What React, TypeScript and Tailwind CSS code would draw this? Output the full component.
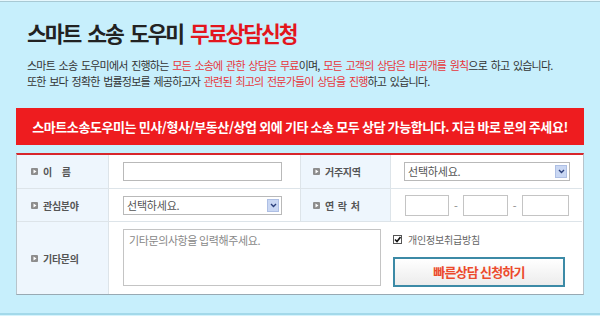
import React from "react";

const FONT = { fontFamily: '"Noto Sans CJK KR", "Noto Sans", sans-serif' };

function Bullet() {
  return (
    <span className="inline-flex w-[7px] h-[7px] bg-[#8d8d8d] rounded-[1px] items-center justify-center shrink-0">
      <svg width="4" height="5" viewBox="0 0 4 5">
        <path d="M0.5 0.5 L3.5 2.5 L0.5 4.5 Z" fill="#fff" />
      </svg>
    </span>
  );
}

function Label({ children, pl = "pl-[14px]" }: { children: React.ReactNode; pl?: string }) {
  return (
    <div className={`flex items-center gap-[5px] ${pl} bg-[#eef6fd] h-full`}>
      <Bullet />
      <span className="text-[10px] font-bold text-[#555] tracking-[-0.3px]">{children}</span>
    </div>
  );
}

function SelectBox({ w }: { w: string }) {
  return (
    <div className={`${w} h-[19px] border border-[#b9b9b9] bg-white flex items-center justify-between pl-[3px] pr-[2px]`}>
      <span className="text-[11px] text-[#555] tracking-[-0.2px]">선택하세요.</span>
      <span className="w-[12px] h-[13px] bg-[#c9d7f3] border border-[#aebfe4] flex items-center justify-center">
        <svg width="7" height="5" viewBox="0 0 7 5">
          <path d="M1 1 L3.5 3.5 L6 1" stroke="#2a3f7a" strokeWidth="1.4" fill="none" />
        </svg>
      </span>
    </div>
  );
}

export default function App() {
  const red = "text-[#e8363b]";
  return (
    <div style={FONT} className="w-[600px] h-[316px] bg-[#c7effc] overflow-hidden flex flex-col">
      <div className="h-[1px] bg-[#e6f7fd]" />
      <div className="h-[1px] bg-[#a8c9d4]" />
      <div className="px-[27px] pt-[18px]">
        <h1 className="text-[21.5px] leading-[26px] font-bold tracking-[-2px] [word-spacing:4px] text-[#222]">
          스마트 소송 도우미 <span className="text-[#e3161d]">무료상담신청</span>
        </h1>
        <p className="mt-[11px] text-[11px] leading-[16px] text-[#333] tracking-[-0.8px] [word-spacing:2px] whitespace-nowrap">
          스마트 소송 도우미에서 진행하는 <span className={red}>모든 소송에 관한 상담은 무료</span>이며,{" "}
          <span className={red}>모든 고객의 상담은 비공개를 원칙</span>으로 하고 있습니다.
          <br />
          또한 보다 정확한 법률정보를 제공하고자 <span className={red}>관련된 최고의 전문가들이 상담을 진행</span>하고 있습니다.
        </p>
      </div>
      <div className="mx-[16px] mt-[19px] h-[37px] bg-[#ee1c1f] flex items-center justify-center">
        <span className="text-white text-[13px] font-bold tracking-[-0.4px] whitespace-nowrap">
          스마트소송도우미는 민사/형사/부동산/상업 외에 기타 소송 모두 상담 가능합니다. 지금 바로 문의 주세요!
        </span>
      </div>
      <div className="mx-[16px] mt-[8px] bg-white border-t-2 border-t-[#d8262b] border-x border-x-[#b7c4cb] border-b border-b-[#98a9b3]">
        <div className="grid grid-cols-[92px_192px_90px_191px] grid-rows-[34px_33px_72px]">
          <div className="border-b border-[#dde4e9] border-r"><Label>이&nbsp;&nbsp;&nbsp;&nbsp;&nbsp;름</Label></div>
          <div className="border-b border-[#dde4e9] border-r flex items-center pl-[14px]">
            <div className="w-[159px] h-[19px] border border-[#b9b9b9] bg-white" />
          </div>
          <div className="border-b border-[#dde4e9] border-r"><Label pl="pl-[12px]">거주지역</Label></div>
          <div className="border-b border-[#dde4e9] flex items-center pl-[13px]">
            <SelectBox w="w-[166px]" />
          </div>

          <div className="border-b border-[#dde4e9] border-r"><Label>관심분야</Label></div>
          <div className="border-b border-[#dde4e9] border-r flex items-center pl-[14px]">
            <SelectBox w="w-[159px]" />
          </div>
          <div className="border-b border-[#dde4e9] border-r"><Label pl="pl-[12px]">연&nbsp;&nbsp;락&nbsp;&nbsp;처</Label></div>
          <div className="border-b border-[#dde4e9] flex items-center pl-[14px] gap-[5px] text-[11px] text-[#888]">
            <div className="w-[44px] h-[21px] border border-[#c4c4c4]" />
            <span>-</span>
            <div className="w-[45px] h-[21px] border border-[#c4c4c4]" />
            <span>-</span>
            <div className="w-[47px] h-[21px] border border-[#c4c4c4]" />
          </div>

          <div className="border-r border-[#dde4e9]"><Label>기타문의</Label></div>
          <div className="col-span-3 flex items-start pl-[14px] pt-[7px] gap-[12px]">
            <div className="w-[258px] h-[57px] border border-[#c4c4c4] px-[5px] pt-[2px] text-[11px] text-[#888] tracking-[-0.4px]">
              기타문의사항을 입력해주세요.
            </div>
            <div className="flex flex-col">
              <div className="flex items-center gap-[6px] mt-[3px]">
                <span className="w-[9px] h-[9px] border border-[#555] bg-white flex items-center justify-center">
                  <svg width="7" height="7" viewBox="0 0 7 7">
                    <path d="M1 3.5 L3 5.5 L6.5 1" stroke="#111" strokeWidth="1.6" fill="none" />
                  </svg>
                </span>
                <span className="text-[10px] text-[#666] tracking-[-0.2px]">개인정보취급방침</span>
              </div>
              <button className="mt-[10px] w-[172px] h-[30px] border-2 border-[#3c8aa6] bg-gradient-to-b from-white to-[#ececec] flex items-center justify-center">
                <span className="text-[13px] font-bold text-[#ec4a2c] tracking-[-0.8px]">빠른상담 신청하기</span>
              </button>
            </div>
          </div>
        </div>
      </div>
      <div className="mt-auto h-[2px] bg-[#a3d9ea]" />
      <div className="h-[1px] bg-[#d6f3fc]" />
    </div>
  );
}
